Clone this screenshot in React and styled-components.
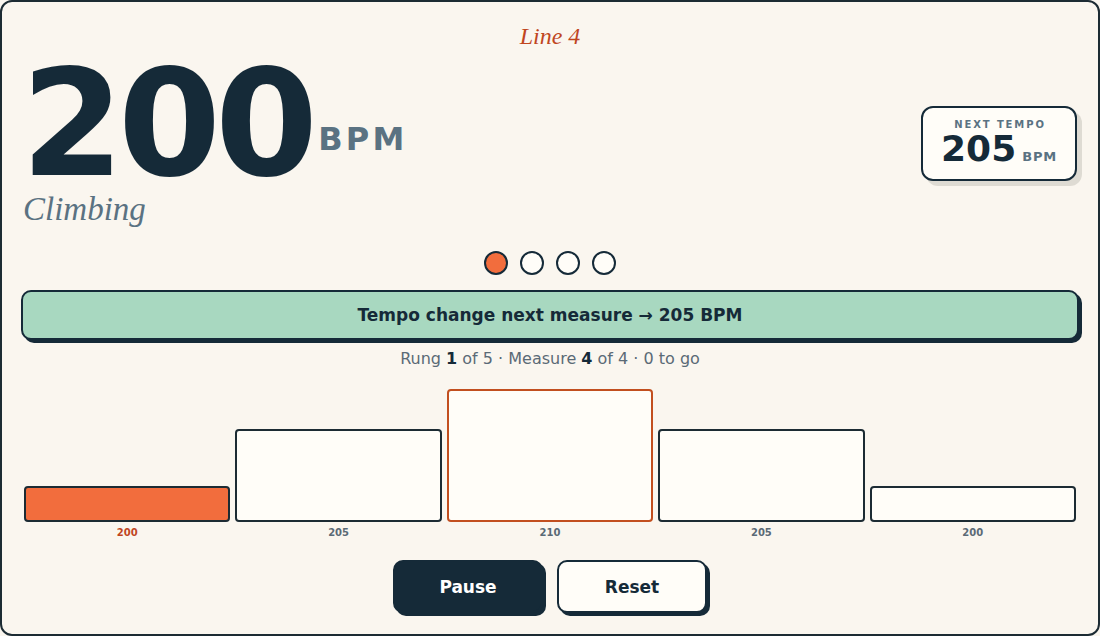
import React from "react";
import styled, { createGlobalStyle } from "styled-components";

const Global = createGlobalStyle`
  html, body { margin: 0; padding: 0; background: #faf6ef; }
  * { box-sizing: border-box; }
`;

const INK = "#152a38";
const MUTED = "#5a7282";

const Frame = styled.div`
  width: 1100px;
  height: 636px;
  border: 2px solid #1c2b33;
  border-radius: 12px;
  background: #faf6ef;
  padding: 22px 19px 0;
  display: flex;
  flex-direction: column;
  font-family: "DejaVu Sans", sans-serif;
  color: ${INK};
  overflow: hidden;
`;

const Title = styled.div`
  text-align: center;
  font-family: "Liberation Serif", serif;
  font-style: italic;
  font-size: 24px;
  line-height: 1;
  color: #c0461f;
`;

const Hero = styled.div`
  display: flex;
  justify-content: space-between;
  align-items: center;
  margin-top: 6px;
`;

const HeroLeft = styled.div`
  display: flex;
  flex-direction: column;
`;

const BigRow = styled.div`
  display: flex;
  align-items: flex-end;
`;

const BigNumber = styled.div`
  font-size: 148px;
  font-weight: 700;
  line-height: 0.95;
  letter-spacing: -0.04em;
  color: ${INK};
`;

const BigUnit = styled.div`
  font-size: 32px;
  font-weight: 700;
  line-height: 1;
  letter-spacing: 0.1em;
  color: ${MUTED};
  margin-left: 6px;
  margin-bottom: 40px;
`;

const Phase = styled.div`
  font-family: "Liberation Serif", serif;
  font-style: italic;
  font-size: 33px;
  line-height: 1;
  color: ${MUTED};
  margin-left: 2px;
  margin-top: -2px;
`;

const NextCard = styled.div`
  width: 156px;
  margin-right: 2px;
  margin-top: 7px;
  border: 2px solid ${INK};
  border-radius: 12px;
  background: #fffdf8;
  box-shadow: 5px 5px 0 #dedbd3;
  padding: 11px 0 12px;
  display: flex;
  flex-direction: column;
  align-items: center;
`;

const NextLabel = styled.div`
  font-size: 10px;
  font-weight: 700;
  letter-spacing: 0.19em;
  line-height: 1.2;
  color: ${MUTED};
  margin-left: 2px;
`;

const NextRow = styled.div`
  display: flex;
  align-items: baseline;
`;

const NextValue = styled.span`
  font-size: 36px;
  font-weight: 700;
  line-height: 1;
  color: ${INK};
`;

const NextUnit = styled.span`
  font-size: 13px;
  font-weight: 700;
  letter-spacing: 0.06em;
  color: ${MUTED};
  margin-left: 6px;
`;

const Dots = styled.div`
  display: flex;
  justify-content: center;
  gap: 12px;
  margin-top: 25px;
`;

const Dot = styled.div`
  width: 24px;
  height: 24px;
  border-radius: 50%;
  border: 2px solid ${INK};
  background: ${(p) => (p.$on ? "#f26d3d" : "#fffdf8")};
`;

const Banner = styled.div`
  margin-top: 15px;
  height: 50px;
  border: 2px solid ${INK};
  border-radius: 10px;
  background: #a8d8c0;
  box-shadow: 3px 3px 0 ${INK};
  display: flex;
  align-items: center;
  justify-content: center;
  font-size: 17px;
  font-weight: 700;
  color: ${INK};
`;

const Status = styled.div`
  margin-top: 9px;
  text-align: center;
  font-size: 16px;
  line-height: 1.2;
  color: #5a6a76;
  b { color: ${INK}; font-weight: 700; }
`;

const Ladder = styled.div`
  margin-top: 21px;
  padding: 0 3px;
  display: grid;
  grid-template-columns: repeat(5, 1fr);
  column-gap: 5px;
  align-items: end;
`;

const Rung = styled.div`
  display: flex;
  flex-direction: column;
  justify-content: flex-end;
  height: 150px;
`;

const Bar = styled.div`
  border: 2px solid ${(p) => (p.$next ? "#c24f1f" : "#1c2b33")};
  border-radius: 4px;
  background: ${(p) => (p.$done ? "#f26d3d" : "#fffdf8")};
`;

const RungLabel = styled.div`
  margin-top: 5px;
  text-align: center;
  font-size: 10px;
  font-weight: 700;
  line-height: 1.2;
  color: ${(p) => (p.$active ? "#c0461f" : "#5a6a76")};
`;

const Controls = styled.div`
  margin-top: 21px;
  display: flex;
  justify-content: center;
  gap: 14px;
`;

const Button = styled.button`
  width: 150px;
  height: 53px;
  border-radius: 10px;
  border: 2px solid ${INK};
  box-shadow: 3px 3px 0 ${INK};
  background: ${(p) => (p.$primary ? INK : "#fffdf8")};
  color: ${(p) => (p.$primary ? "#ffffff" : INK)};
  font-family: "DejaVu Sans", sans-serif;
  font-size: 17px;
  font-weight: 700;
  cursor: pointer;
  padding: 0;
  padding-top: 1px;
`;

const rungs = [
  { bpm: 200, h: 36, done: true, active: true },
  { bpm: 205, h: 93 },
  { bpm: 210, h: 135, next: true },
  { bpm: 205, h: 93 },
  { bpm: 200, h: 36 },
];

export default function App() {
  return (
    <>
      <Global />
      <Frame>
        <Title>Line 4</Title>
        <Hero>
          <HeroLeft>
            <BigRow>
              <BigNumber>200</BigNumber>
              <BigUnit>BPM</BigUnit>
            </BigRow>
            <Phase>Climbing</Phase>
          </HeroLeft>
          <NextCard>
            <NextLabel>NEXT TEMPO</NextLabel>
            <NextRow>
              <NextValue>205</NextValue>
              <NextUnit>BPM</NextUnit>
            </NextRow>
          </NextCard>
        </Hero>
        <Dots>
          {[0, 1, 2, 3].map((i) => (
            <Dot key={i} $on={i === 0} />
          ))}
        </Dots>
        <Banner>Tempo change next measure → 205 BPM</Banner>
        <Status>
          Rung <b>1</b> of 5 · Measure <b>4</b> of 4 · 0 to go
        </Status>
        <Ladder>
          {rungs.map((r, i) => (
            <Rung key={i}>
              <Bar $done={r.done} $next={r.next} style={{ height: r.h }} />
              <RungLabel $active={r.active}>{r.bpm}</RungLabel>
            </Rung>
          ))}
        </Ladder>
        <Controls>
          <Button $primary>Pause</Button>
          <Button>Reset</Button>
        </Controls>
      </Frame>
    </>
  );
}
